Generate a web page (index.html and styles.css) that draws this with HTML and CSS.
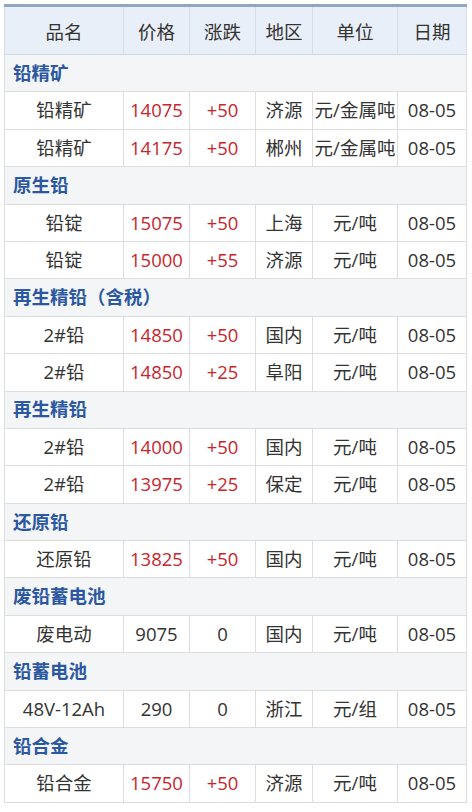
FILE: index.html
```html
<!DOCTYPE html>
<html lang="zh">
<head>
<meta charset="utf-8">
<link rel="stylesheet" href="styles.css">
</head>
<body>
<table class="price">
<colgroup>
<col class="c1"><col class="c2"><col class="c3"><col class="c4"><col class="c5"><col class="c6">
</colgroup>
<thead>
<tr><th>品名</th><th>价格</th><th>涨跌</th><th>地区</th><th>单位</th><th>日期</th></tr>
</thead>
<tbody>
<tr class="sec"><td colspan="6">铅精矿</td></tr>
<tr><td>铅精矿</td><td class="up">14075</td><td class="up">+50</td><td>济源</td><td>元/金属吨</td><td>08-05</td></tr>
<tr><td>铅精矿</td><td class="up">14175</td><td class="up">+50</td><td>郴州</td><td>元/金属吨</td><td>08-05</td></tr>
<tr class="sec"><td colspan="6">原生铅</td></tr>
<tr><td>铅锭</td><td class="up">15075</td><td class="up">+50</td><td>上海</td><td>元/吨</td><td>08-05</td></tr>
<tr><td>铅锭</td><td class="up">15000</td><td class="up">+55</td><td>济源</td><td>元/吨</td><td>08-05</td></tr>
<tr class="sec"><td colspan="6">再生精铅（含税）</td></tr>
<tr><td>2#铅</td><td class="up">14850</td><td class="up">+50</td><td>国内</td><td>元/吨</td><td>08-05</td></tr>
<tr><td>2#铅</td><td class="up">14850</td><td class="up">+25</td><td>阜阳</td><td>元/吨</td><td>08-05</td></tr>
<tr class="sec"><td colspan="6">再生精铅</td></tr>
<tr><td>2#铅</td><td class="up">14000</td><td class="up">+50</td><td>国内</td><td>元/吨</td><td>08-05</td></tr>
<tr><td>2#铅</td><td class="up">13975</td><td class="up">+25</td><td>保定</td><td>元/吨</td><td>08-05</td></tr>
<tr class="sec"><td colspan="6">还原铅</td></tr>
<tr><td>还原铅</td><td class="up">13825</td><td class="up">+50</td><td>国内</td><td>元/吨</td><td>08-05</td></tr>
<tr class="sec"><td colspan="6">废铅蓄电池</td></tr>
<tr><td>废电动</td><td>9075</td><td>0</td><td>国内</td><td>元/吨</td><td>08-05</td></tr>
<tr class="sec"><td colspan="6">铅蓄电池</td></tr>
<tr><td>48V-12Ah</td><td>290</td><td>0</td><td>浙江</td><td>元/组</td><td>08-05</td></tr>
<tr class="sec"><td colspan="6">铅合金</td></tr>
<tr><td>铅合金</td><td class="up">15750</td><td class="up">+50</td><td>济源</td><td>元/吨</td><td>08-05</td></tr>
</tbody>
</table>
</body>
</html>
```
FILE: styles.css
```css
html, body {
  margin: 0;
  padding: 0;
  background: #ffffff;
}
body {
  padding: 4px 6px 0 4px;
  font-family: "Open Sans", "Noto Sans CJK SC", sans-serif;
  color: #333333;
}
.price {
  width: 462px;
  table-layout: fixed;
  border-collapse: collapse;
  border-top: 3px solid #8fa8c0;
  font-size: 18.5px;
}
.c1 { width: 119px; }
.c2 { width: 66px; }
.c3 { width: 66px; }
.c4 { width: 57px; }
.c5 { width: 85px; }
.c6 { width: 69px; }
.price th {
  height: 47px;
  padding: 0;
  background: #e8eff8;
  font-weight: normal;
  color: #333333;
  border-left: 1px solid #d5dde6;
  border-right: 1px solid #d5dde6;
  border-bottom: 1px solid #d0d8e0;
  text-align: center;
}
.price td {
  height: 36.4px;
  padding: 0;
  text-align: center;
  border: 1px solid #dddddd;
  white-space: nowrap;
  overflow: hidden;
  line-height: 1;
}
.price .sec td {
  text-align: left;
  padding-left: 8px;
  background: #f4f5f7;
  font-weight: bold;
  color: #2b58a0;
  border-left: 1px solid #dddddd;
}
.price td.up {
  color: #c8262d;
}
```
